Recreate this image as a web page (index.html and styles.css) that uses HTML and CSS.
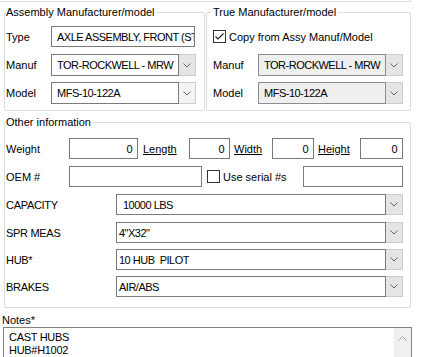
FILE: index.html
```html
<html>

<head>
    <title>Assembly</title>
    <link rel="stylesheet" href="styles.css">
</head>

<body>
	<div class="prev"></div>

	<div class="top">
		<fieldset class="grp grp-assy">
			<legend>Assembly Manufacturer/model</legend>
			<div class="rows">
				<div class="row row-first">
					<span class="lbl">Type</span>
					<div class="box txt-wide"><span class="val">AXLE ASSEMBLY, FRONT (STEER)</span></div>
				</div>
				<div class="row">
					<span class="lbl">Manuf</span>
					<div class="combo">
						<div class="cv">TOR-ROCKWELL - MRW</div>
						<div class="cb"><svg width="8" height="5" viewBox="0 0 8 5"><polyline points="0.5,0.5 4,4 7.5,0.5" fill="none" stroke="#666" stroke-width="1"/></svg></div>
					</div>
				</div>
				<div class="row">
					<span class="lbl">Model</span>
					<div class="combo">
						<div class="cv">MFS-10-122A</div>
						<div class="cb cb-lite"><svg width="8" height="5" viewBox="0 0 8 5"><polyline points="0.5,0.5 4,4 7.5,0.5" fill="none" stroke="#666" stroke-width="1"/></svg></div>
					</div>
				</div>
			</div>
		</fieldset>

		<fieldset class="grp grp-true">
			<legend>True Manufacturer/model</legend>
			<div class="rows">
				<div class="row row-first">
					<span class="chk"><svg width="11" height="11" viewBox="0 0 11 11"><polyline points="1.5,5.5 4,8 9.5,2.5" fill="none" stroke="#222" stroke-width="1.1"/></svg></span>
					<span class="chk-text">Copy from Assy Manuf/Model</span>
				</div>
				<div class="row">
					<span class="lbl">Manuf</span>
					<div class="combo combo-off">
						<div class="cv">TOR-ROCKWELL - MRW</div>
						<div class="cb"><svg width="8" height="5" viewBox="0 0 8 5"><polyline points="0.5,0.5 4,4 7.5,0.5" fill="none" stroke="#666" stroke-width="1"/></svg></div>
					</div>
				</div>
				<div class="row">
					<span class="lbl">Model</span>
					<div class="combo combo-off">
						<div class="cv">MFS-10-122A</div>
						<div class="cb"><svg width="8" height="5" viewBox="0 0 8 5"><polyline points="0.5,0.5 4,4 7.5,0.5" fill="none" stroke="#666" stroke-width="1"/></svg></div>
					</div>
				</div>
			</div>
		</fieldset>
	</div>

	<fieldset class="grp grp-other">
		<legend>Other information</legend>
		<div class="orows">
			<div class="orow dims">
				<span class="lbl">Weight</span>
				<div class="box num">0</div>
				<span class="lk lk-first">Length</span>
				<div class="box num">0</div>
				<span class="lk">Width</span>
				<div class="box num">0</div>
				<span class="lk">Height</span>
				<div class="box num">0</div>
			</div>
			<div class="orow oem">
				<span class="lbl">OEM #</span>
				<div class="box"></div>
				<span class="chk-cell"><span class="chk"></span><span>Use serial #s</span></span>
				<div class="box"></div>
			</div>
			<div class="orow attr">
				<span class="lbl">CAPACITY</span>
				<div class="combo">
					<div class="cv cv-cap">10000 LBS</div>
					<div class="cb"><svg width="8" height="5" viewBox="0 0 8 5"><polyline points="0.5,0.5 4,4 7.5,0.5" fill="none" stroke="#666" stroke-width="1"/></svg></div>
				</div>
			</div>
			<div class="orow attr">
				<span class="lbl">SPR MEAS</span>
				<div class="combo">
					<div class="cv">4"X32"</div>
					<div class="cb"><svg width="8" height="5" viewBox="0 0 8 5"><polyline points="0.5,0.5 4,4 7.5,0.5" fill="none" stroke="#666" stroke-width="1"/></svg></div>
				</div>
			</div>
			<div class="orow attr">
				<span class="lbl">HUB*</span>
				<div class="combo">
					<div class="cv">10 HUB  PILOT</div>
					<div class="cb"><svg width="8" height="5" viewBox="0 0 8 5"><polyline points="0.5,0.5 4,4 7.5,0.5" fill="none" stroke="#666" stroke-width="1"/></svg></div>
				</div>
			</div>
			<div class="orow attr">
				<span class="lbl">BRAKES</span>
				<div class="combo">
					<div class="cv">AIR/ABS</div>
					<div class="cb"><svg width="8" height="5" viewBox="0 0 8 5"><polyline points="0.5,0.5 4,4 7.5,0.5" fill="none" stroke="#666" stroke-width="1"/></svg></div>
				</div>
			</div>
		</div>
	</fieldset>

	<div class="notes-lbl">Notes*</div>
	<div class="notes">
		<div class="ntext">CAST HUBS<br>HUB#H1002</div>
		<div class="nscroll"><svg width="9" height="5" viewBox="0 0 9 5"><polyline points="0.5,4.5 4.5,0.5 8.5,4.5" fill="none" stroke="#a6a6a6" stroke-width="1"/></svg></div>
	</div>
</body>

</html>
```

FILE: styles.css
```css
	body {
		margin: 0;
		height: 357px;
		overflow: hidden;
		font-family: "Liberation Sans", Arial, sans-serif;
		font-size: 11px;
		color: #000;
		background-color: #fff;
	}

	.prev {
		width: 410px;
		height: 1px;
		border-right: 1px solid #dcdcdc;
		border-bottom: 1px solid #dcdcdc;
	}

	.top {
		display: flex;
		margin-top: 4px;
	}

	/* group boxes */
	.grp {
		margin: 0;
		min-width: 0;
		border: 1px solid #dcdcdc;
		border-radius: 2px;
		padding: 7px 0 6px 1px;
	}

	.grp legend {
		padding: 0 2px 0 0;
		line-height: 13px;
	}

	.grp-assy {
		margin-left: 4px;
		width: 198px;
	}

	.grp-true {
		margin-left: 1px;
		padding-left: 6px;
		width: 197px;
	}

	.grp-true legend {
		margin-left: -2px;
		padding: 0 2px;
	}

	.grp-other {
		margin: 5px 0 0 4px;
		padding: 9px 0 10px 1px;
		width: 404px;
	}

	.rows {
		display: flex;
		flex-direction: column;
		gap: 6px;
	}

	.row {
		display: flex;
		align-items: center;
		height: 22px;
	}

	.row-first {
		height: 21px;
		margin-bottom: 1px;
	}

	.lbl {
		display: flex;
		align-items: center;
		width: 45px;
		flex: none;
	}

	/* inputs */
	.box {
		box-sizing: border-box;
		height: 100%;
		border: 1px solid #7a7a7a;
		background: #fff;
		display: flex;
		align-items: center;
		overflow: hidden;
		white-space: pre;
		padding: 0 5px;
		letter-spacing: -0.5px;
	}

	.txt-wide {
		width: 144px;
	}

	.num {
		justify-content: flex-end;
	}

	.combo {
		display: flex;
		width: 145px;
		height: 100%;
		box-sizing: border-box;
	}

	.cv {
		flex: 1;
		min-width: 0;
		border: 1px solid #7a7a7a;
		background: #fff;
		display: flex;
		align-items: center;
		padding: 0 0 0 5px;
		overflow: hidden;
		white-space: pre;
		letter-spacing: -0.5px;
	}

	.cb {
		width: 16px;
		flex: none;
		border: 1px solid #cccccc;
		border-left: none;
		background: #e5e5e5;
		display: flex;
		align-items: center;
		justify-content: center;
	}

	.cb-lite {
		background: #f3f3f3;
	}

	.combo-off .cv {
		background: #efefef;
		border-color: #8c8c8c;
	}

	.chk {
		box-sizing: border-box;
		width: 13px;
		height: 13px;
		flex: none;
		border: 1px solid #333;
		background: #fff;
		display: flex;
	}

	.chk-text {
		margin-left: 3px;
	}

	/* other information */
	.orows {
		display: flex;
		flex-direction: column;
		gap: 6px;
	}

	.orow {
		display: grid;
		height: 21px;
	}

	.orow:nth-child(-n+3) {
		margin-bottom: 1px;
	}

	.dims {
		grid-template-columns: 63px 69px 51px 41px 42px 42px 46px 43px;
	}

	.lk {
		display: flex;
		align-items: center;
		padding-left: 4px;
		text-decoration: underline;
	}

	.lk-first {
		padding-left: 5px;
	}

	.oem {
		grid-template-columns: 63px 133px 101px 100px;
	}

	.chk-cell {
		display: flex;
		align-items: center;
		gap: 3px;
		padding-left: 5px;
	}

	.attr {
		grid-template-columns: 110px 287px;
	}

	.attr .lbl {
		width: auto;
		letter-spacing: -0.3px;
	}

	.attr .combo {
		width: 287px;
	}

	.attr .cv {
		padding-left: 2px;
	}

	.attr .cv-cap {
		padding-left: 6px;
	}

	/* notes */
	.notes-lbl {
		margin: 6px 0 0 2px;
		line-height: 13px;
	}

	.notes {
		display: flex;
		box-sizing: border-box;
		width: 409px;
		height: 44px;
		margin-left: 3px;
		border: 1px solid #828282;
	}

	.ntext {
		flex: 1;
		padding: 3px 5px;
		line-height: 13px;
		letter-spacing: -0.3px;
	}

	.nscroll {
		width: 17px;
		background: #f0f0f0;
		display: flex;
		justify-content: center;
		padding-top: 8px;
		box-sizing: border-box;
	}
```
